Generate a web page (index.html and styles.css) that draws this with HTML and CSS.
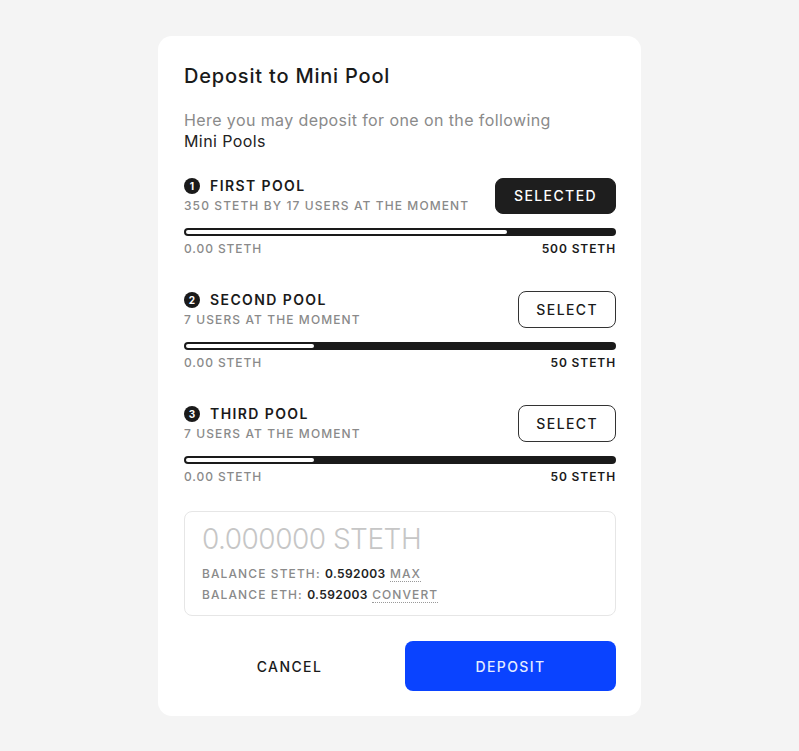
FILE: index.html
```html
<!DOCTYPE html>
<html lang="en">
<head>
    <meta charset="UTF-8">
    <meta name="viewport" content="width=device-width, initial-scale=1.0">
    <title>Deposit to Mini Pool</title>
    <link rel="stylesheet" href="styles.css">
</head>
<body>
    <!-- Deposit dialog -->
    <div class="dialog">
        <h1 class="title">Deposit to Mini Pool</h1>
        <p class="intro">Here you may deposit for one on the following<br><span>Mini Pools</span></p>

        <div class="pool">
            <div class="pool-head">
                <div>
                    <div class="pool-name"><span class="num">1</span>First Pool</div>
                    <div class="pool-sub">350 stETH by 17 users at the moment</div>
                </div>
                <button class="btn-select active">Selected</button>
            </div>
            <div class="track"><div class="fill" style="width: 75%"></div></div>
            <div class="range"><span>0.00 stETH</span><b>500 stETH</b></div>
        </div>

        <div class="pool">
            <div class="pool-head">
                <div>
                    <div class="pool-name"><span class="num">2</span>Second Pool</div>
                    <div class="pool-sub">7 users at the moment</div>
                </div>
                <button class="btn-select">Select</button>
            </div>
            <div class="track"><div class="fill" style="width: 30%"></div></div>
            <div class="range"><span>0.00 stETH</span><b>50 stETH</b></div>
        </div>

        <div class="pool">
            <div class="pool-head">
                <div>
                    <div class="pool-name"><span class="num">3</span>Third Pool</div>
                    <div class="pool-sub">7 users at the moment</div>
                </div>
                <button class="btn-select">Select</button>
            </div>
            <div class="track"><div class="fill" style="width: 30%"></div></div>
            <div class="range"><span>0.00 stETH</span><b>50 stETH</b></div>
        </div>

        <!-- Amount input -->
        <div class="amount">
            <div class="amount-value">0.000000 STETH</div>
            <div class="balance">Balance stETH: <b>0.592003</b> <a class="link">Max</a></div>
            <div class="balance">Balance ETH: <b>0.592003</b> <a class="link">Convert</a></div>
        </div>

        <div class="actions">
            <button class="btn-cancel">Cancel</button>
            <button class="btn-deposit">Deposit</button>
        </div>
    </div>
</body>
</html>
```

FILE: styles.css
```css
/* Base */
body, html {
    margin: 0;
    padding: 0;
    font-family: Inter, "Noto Sans", sans-serif;
    background-color: #f4f4f4;
    color: #1a1a1a;
}

.dialog {
    width: 483px;
    box-sizing: border-box;
    margin: 36px auto 0;
    padding: 28px 25px 25px 26px;
    background: #fff;
    border-radius: 14px;
}

.title {
    margin: 0;
    font-size: 20px;
    line-height: 25px;
    font-weight: 500;
    letter-spacing: 0.8px;
}

.intro {
    margin: 21px 0 0;
    font-size: 16px;
    line-height: 21px;
    letter-spacing: 0.4px;
    color: #8a8a8a;
}

.intro span {
    color: #222;
}

/* Pools */
.pool {
    margin-top: 25px;
}

.pool + .pool {
    margin-top: 35px;
}

.pool-head {
    display: flex;
    justify-content: space-between;
    align-items: center;
}

.pool-name {
    display: flex;
    align-items: center;
    font-size: 14px;
    line-height: 18px;
    font-weight: 600;
    letter-spacing: 1.4px;
    text-transform: uppercase;
}

.num {
    width: 16px;
    height: 16px;
    border-radius: 50%;
    background: #1a1a1a;
    color: #fff;
    font-size: 10px;
    line-height: 16px;
    font-weight: 700;
    text-align: center;
    letter-spacing: 0;
    margin-right: 10px;
}

.pool-sub {
    margin-top: 3px;
    font-size: 12px;
    line-height: 16px;
    font-weight: 500;
    letter-spacing: 1.1px;
    color: #8a8a8a;
    text-transform: uppercase;
}

.btn-select {
    height: 37px;
    padding: 0 17px;
    font-family: inherit;
    font-size: 14px;
    font-weight: 500;
    letter-spacing: 1.4px;
    text-transform: uppercase;
    color: #1a1a1a;
    background: #fff;
    border: 1px solid #333;
    border-radius: 8px;
}

.btn-select.active {
    height: 36px;
    padding: 0 18px;
    background: #1e1e1e;
    border-color: #1e1e1e;
    color: #fff;
}

.track {
    margin-top: 14px;
    height: 8px;
    padding: 2px;
    box-sizing: border-box;
    border-radius: 4px;
    background: #1a1a1a;
}

.fill {
    height: 4px;
    border-radius: 2px;
    background: #fff;
}

.range {
    display: flex;
    justify-content: space-between;
    margin-top: 6px;
    font-size: 12px;
    line-height: 14px;
    letter-spacing: 0.9px;
    text-transform: uppercase;
    color: #8a8a8a;
    font-weight: 500;
}

.range b {
    color: #1a1a1a;
    font-weight: 600;
}

/* Amount */
.amount {
    margin-top: 27px;
    padding: 10px 17px 10px;
    border: 1px solid #e6e6e6;
    border-radius: 8px;
}

.amount-value {
    font-size: 28px;
    line-height: 34px;
    font-weight: 300;
    color: #c6c6c6;
    letter-spacing: -0.5px;
    margin-bottom: 7px;
}

.balance {
    font-size: 12px;
    line-height: 21px;
    font-weight: 500;
    letter-spacing: 1.1px;
    text-transform: uppercase;
    color: #8a8a8a;
}

.balance b {
    color: #222;
    font-weight: 600;
    letter-spacing: 0.4px;
}

.link {
    border-bottom: 1px dotted #999;
}

/* Actions */
.actions {
    display: grid;
    grid-template-columns: 1fr 1fr;
    gap: 10px;
    margin-top: 25px;
}

.btn-cancel,
.btn-deposit {
    height: 50px;
    font-family: inherit;
    font-size: 14px;
    font-weight: 500;
    letter-spacing: 1.4px;
    text-transform: uppercase;
    border: none;
    border-radius: 8px;
}

.btn-cancel {
    background: #fff;
    color: #1a1a1a;
}

.btn-deposit {
    background: #0a43ff;
    color: #e4ecff;
}
```
